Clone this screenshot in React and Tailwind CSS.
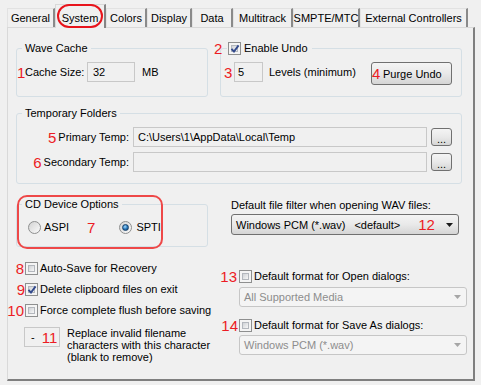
import React from 'react';

const Red = ({ children, className = '' }) => (
  <span className={`text-[15px] leading-[15px] text-[#ec1c24] ${className}`}>{children}</span>
);

const Check = ({ checked }) => (
  <span className="relative flex w-[13px] h-[13px] shrink-0 border border-[#8e8f8f] bg-[#f4f4f4] p-[2px]">
    <span className="block w-full h-full border border-[#b3b7bd] bg-linear-to-br from-[#cfd2d6] to-[#f7f7f7]" />
    {checked && (
      <svg className="absolute left-[1px] top-[1px]" width="10" height="10" viewBox="0 0 10 10">
        <path d="M1.5 4.8 L4 7.6 L8.6 1.4" fill="none" stroke="#32498c" strokeWidth="1.9" />
      </svg>
    )}
  </span>
);

const Radio = ({ checked }) => (
  <span className="flex shrink-0 items-center justify-center w-[13px] h-[13px] rounded-full border border-[#8e8f8f] bg-linear-to-br from-[#d3d3d3] to-[#fbfbfb]">
    {checked && (
      <span className="w-[7px] h-[7px] rounded-full border border-[#16416b] bg-[radial-gradient(circle_at_40%_35%,#a6dcff,#2a79bd_50%,#0e3b66)]" />
    )}
  </span>
);

const Btn = ({ className = '', children }) => (
  <div className={`flex items-center border border-[#707070] rounded-[3px] bg-linear-to-b from-[#f4f4f4] via-[#e9e9e9] to-[#d5d5d5] ${className}`}>
    {children}
  </div>
);

const Arrow = ({ color }) => (
  <svg width="7" height="4" viewBox="0 0 7 4">
    <path d="M0 0h7L3.5 4z" fill={color} />
  </svg>
);

const box = 'border border-[#d5dfe5] rounded-[3px]';
const field = 'border border-[#c8c8c8] bg-[#f0f0f0] flex items-center';

const tabs = [
  { label: 'General', w: 'w-[48px]' },
  { label: 'System', w: 'w-[51px]', sel: true },
  { label: 'Colors', w: 'w-[41px]' },
  { label: 'Display', w: 'w-[45px]' },
  { label: 'Data', w: 'w-[41px]' },
  { label: 'Multitrack', w: 'w-[60px]' },
  { label: 'SMPTE/MTC', w: 'w-[67px]' },
  { label: 'External Controllers', w: 'w-[108px]' },
];

const CheckRow = ({ num, numCls, checked, children }) => (
  <div className="relative flex items-center h-[14px] gap-[2px]">
    <Red className={`absolute right-full ${numCls}`}>{num}</Red>
    <Check checked={checked} />
    <span>{children}</span>
  </div>
);

const FolderRow = ({ num, label, value }) => (
  <div className="flex items-center h-[20px]">
    <div className="w-[112px] flex justify-end items-center gap-[2px]">
      <Red>{num}</Red>
      <span>{label}</span>
    </div>
    <div className={`ml-[4px] w-[294px] h-[20px] pl-[4px] ${field}`}>{value}</div>
    <Btn className="ml-[4px] w-[21px] h-[18px] justify-center pt-[3px]">...</Btn>
  </div>
);

export default function App() {
  return (
    <div className="w-[481px] h-[385px] bg-[#f0f0f0] text-[11px] leading-[14px] text-black font-['Liberation_Sans',Arial,sans-serif] overflow-hidden">
      <div className="flex items-end h-[27px] pl-[7px]">
        {tabs.map((t) =>
          t.sel ? (
            <div key={t.label} className={`relative z-10 -mb-px h-[24px] pt-[6px] ${t.w} flex justify-center bg-[#f0f0f0] border-t border-l border-[#d9d9d9] border-r-2 border-r-[#858585]`}>
              {t.label}
              <div className="absolute left-[1px] -top-[1px] w-[46px] h-[24px] border-2 border-[#e8141c] rounded-[12px]" />
            </div>
          ) : (
            <div key={t.label} className={`h-[19px] pt-[2px] ${t.w} flex justify-center border-t border-l border-[#e2e2e2] border-r-2 border-r-[#8a8a8a]`}>
              {t.label}
            </div>
          )
        )}
      </div>

      <div className="ml-[7px] w-[468px] h-[354px] border-t border-l border-[#d9d9d9] border-r-2 border-b-2 border-r-[#7f7f7f] border-b-[#7f7f7f] pl-[8px] pt-[13px] flex flex-col">
        <div className="flex gap-[12px]">
          <fieldset className={`w-[192px] pb-[14px] ${box}`}>
            <legend className="ml-[5px] px-[3px] leading-[14px]">Wave Cache</legend>
            <div className="mt-[7px] flex items-center h-[20px]">
              <Red className="w-[8px]">1</Red>
              <span className="w-[62px]">Cache Size:</span>
              <div className={`w-[48px] h-[20px] pl-[5px] ${field}`}>32</div>
              <span className="ml-[7px]">MB</span>
            </div>
          </fieldset>

          <fieldset className={`w-[242px] pb-[14px] ${box}`}>
            <legend className="ml-[6px] pl-[1px] pr-[4px] leading-[14px]">
              <span className="relative flex items-center h-[14px] gap-[3px]">
                <Red className="absolute -left-[14px]">2</Red>
                <Check checked />
                Enable Undo
              </span>
            </legend>
            <div className="mt-[7px] flex items-center h-[20px] pl-[3px]">
              <Red className="w-[10px]">3</Red>
              <div className={`w-[29px] h-[20px] pl-[3px] ${field}`}>5</div>
              <span className="ml-[6px]">Levels (minimum)</span>
              <Btn className="self-start ml-auto mr-[9px] w-[81px] h-[23px]">
                <Red className="w-[11px]">4</Red>
                Purge Undo
              </Btn>
            </div>
          </fieldset>
        </div>

        <fieldset className={`mt-[9px] w-[446px] pb-[11px] ${box}`}>
          <legend className="ml-[5px] px-[3px] leading-[14px]">Temporary Folders</legend>
          <div className="mt-[7px] flex flex-col gap-[5px]">
            <FolderRow num="5" label="Primary Temp:" value="C:\Users\1\AppData\Local\Temp" />
            <FolderRow num="6" label="Secondary Temp:" value="" />
          </div>
        </fieldset>

        <div className="mt-[13px] flex">
          <div className="relative">
            <fieldset className={`w-[192px] pb-[11px] ${box}`}>
              <legend className="ml-[5px] px-[3px] leading-[14px]">CD Device Options</legend>
              <div className="mt-[8px] h-[16px] flex items-center pl-[11px]">
                <Radio />
                <span className="ml-[3px]">ASPI</span>
                <Red className="ml-[18px]">7</Red>
                <span className="ml-[24px] flex">
                  <Radio checked />
                </span>
                <span className="ml-[4px]">SPTI</span>
              </div>
            </fieldset>
            <div className="absolute left-[1px] -top-[2px] w-[146px] h-[54px] border-2 border-[#ee4848] rounded-[10px]" />
          </div>

          <div className="ml-[23px] flex flex-col">
            <div className="mt-[1px]">Default file filter when opening WAV files:</div>
            <Btn className="mt-[2px] w-[228px] h-[21px] pl-[4px] pr-[5px]">
              <span>Windows PCM (*.wav)</span>
              <span className="ml-[9px]">&lt;default&gt;</span>
              <Red className="ml-[18px]">12</Red>
              <span className="ml-auto flex">
                <Arrow color="#1a1a1a" />
              </span>
            </Btn>
          </div>
        </div>

        <div className="mt-[14px] flex">
          <div className="w-[223px] pl-[9px] flex flex-col">
            <div className="flex flex-col gap-[7px]">
              <CheckRow num="8" numCls="mr-[1px]">Auto-Save for Recovery</CheckRow>
              <CheckRow num="9" numCls="mr-[0px]" checked>Delete clipboard files on exit</CheckRow>
              <CheckRow num="10" numCls="mr-[1px]">Force complete flush before saving</CheckRow>
            </div>
            <div className="mt-[10px] flex items-start">
              <div className={`-ml-[1px] w-[36px] h-[20px] pl-[6px] ${field}`}>
                -<Red className="ml-[7px]">11</Red>
              </div>
              <div className="ml-[7px] leading-[12px]">
                Replace invalid filename
                <br />
                characters with this character
                <br />
                (blank to remove)
              </div>
            </div>
          </div>

          <div className="w-[228px] flex flex-col pt-[8px]">
            <CheckRow num="13" numCls="mr-[2px]">Default format for Open dialogs:</CheckRow>
            <div className="mt-[4px] w-[228px] h-[20px] border border-[#c6c6c6] rounded-[3px] bg-[#f4f4f4] text-[#8d8d8d] pl-[4px] pr-[5px] flex items-center justify-between">
              All Supported Media
              <Arrow color="#a6a6a6" />
            </div>
            <div className="mt-[11px]">
              <CheckRow num="14" numCls="mr-[1px]">Default format for Save As dialogs:</CheckRow>
            </div>
            <div className="mt-[3px] w-[228px] h-[20px] border border-[#c6c6c6] rounded-[3px] bg-[#f4f4f4] text-[#8d8d8d] pl-[4px] pr-[5px] flex items-center justify-between">
              Windows PCM (*.wav)
              <Arrow color="#a6a6a6" />
            </div>
          </div>
        </div>
      </div>
    </div>
  );
}
